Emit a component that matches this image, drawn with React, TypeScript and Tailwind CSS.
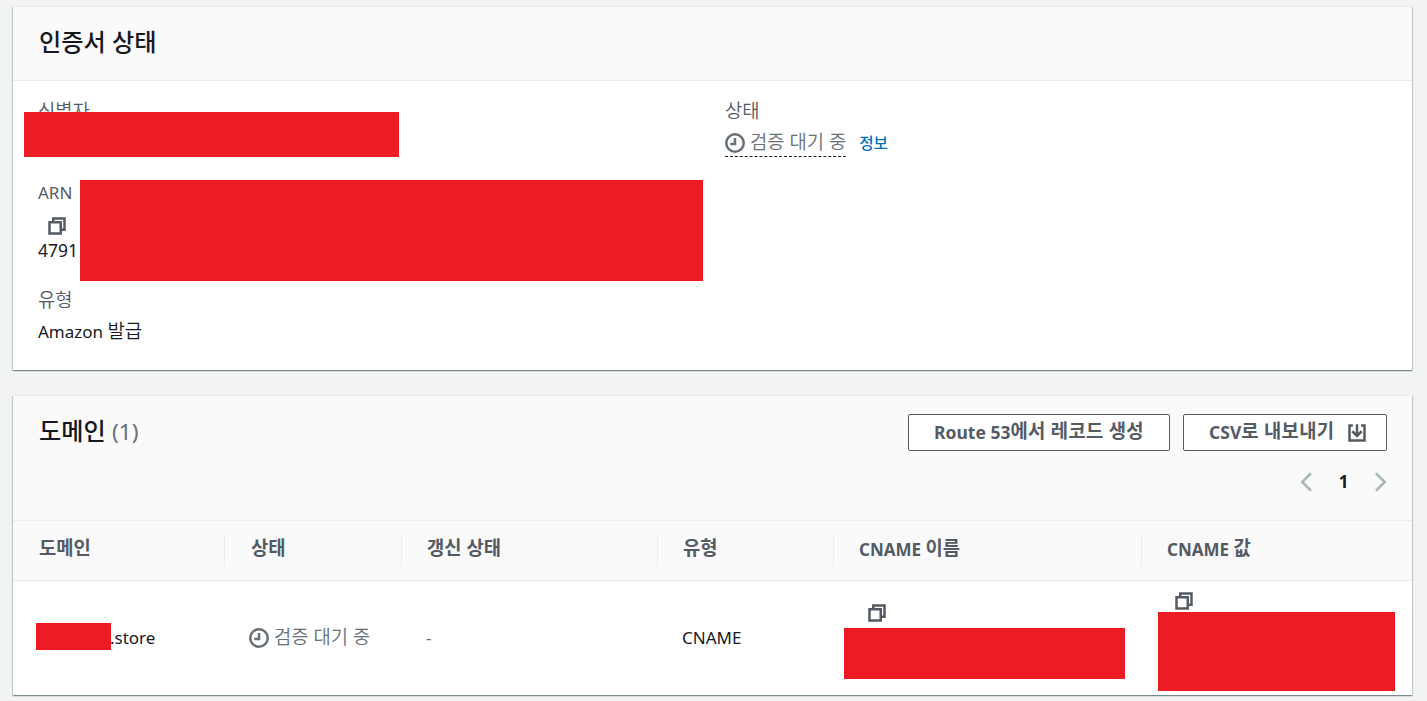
import type { ReactNode } from 'react';

function CopyIcon() {
  return (
    <svg viewBox="0 0 16 16" className="block size-5 fill-none stroke-[#545b64] stroke-2">
      <path d="M2 5h9v9H2z" />
      <path d="M5 5V2h9v9h-3" />
    </svg>
  );
}

function PendingIcon() {
  return (
    <svg viewBox="0 0 16 16" className="block size-5 shrink-0 fill-none stroke-[#687078] stroke-2">
      <circle cx="8" cy="8" r="7" />
      <path d="M8 4v4.7H4.2" />
    </svg>
  );
}

function DownloadIcon() {
  return (
    <svg viewBox="0 0 16 16" className="block size-5 fill-none stroke-[#545b64] stroke-2">
      <path d="M4.7 2H2v12h12V2h-2.7" />
      <path d="M8 1v9" />
      <path d="M4.3 6.6L8 10.3l3.7-3.7" />
    </svg>
  );
}

// Hangul is set a little larger than the Latin text beside it
function Ko({ className = 'font-[350]', children }: { className?: string; children: ReactNode }) {
  return <span className={`text-[18.8px] leading-none ${className}`}>{children}</span>;
}

function PendingStatus() {
  return (
    <>
      <PendingIcon />
      <span className="text-[#687078]">
        <Ko>검증 대기 중</Ko>
      </span>
    </>
  );
}

function Card({ className, children }: { className: string; children: ReactNode }) {
  return (
    <section
      className={`relative border-t border-[#eaeded] bg-white shadow-[0_1px_1px_0_rgba(0,28,36,0.3),1px_1px_1px_0_rgba(0,28,36,0.15),-1px_1px_1px_0_rgba(0,28,36,0.15)] ${className}`}
    >
      {children}
    </section>
  );
}

function Redaction({ className }: { className: string }) {
  return <div className={`absolute bg-[#ed1c24] ${className}`} />;
}

const columns = [
  { latin: '', label: '도메인', width: 'w-[212px] pl-[26px]' },
  { latin: '', label: '상태', width: 'w-[177px] pl-[26px]' },
  { latin: '', label: '갱신 상태', width: 'w-[256px] pl-[25px]' },
  { latin: '', label: '유형', width: 'w-[176px] pl-[25px]' },
  { latin: 'CNAME ', label: '이름', width: 'w-[308px] pl-[25px]' },
  { latin: 'CNAME ', label: '값', width: 'w-[270px] pl-[25px]' },
];

export default function App() {
  return (
    <div className="h-[701px] w-[1427px] overflow-hidden bg-[#f2f3f3] pt-1.5 pl-[13px] font-['Noto_Sans','Noto_Sans_CJK_KR',sans-serif] text-[17px] leading-[26px] text-[#16191f]">
      <Card className="h-[364px] w-[1399px]">
        <header className="h-[74px] border-b border-[#eaeded] bg-[#fafafa] pt-[18px] pl-[26px]">
          <h2 className="text-[24.2px] leading-[33px] font-medium">인증서 상태</h2>
        </header>
        <div className="flex pl-[25px]">
          <dl className="w-[687px]">
            <dt className="mt-[18px] text-[#545b64]">
              <Ko>식별자</Ko>
            </dt>
            <dd className="h-[55px]" />
            <dt className="text-[#545b64]">ARN</dt>
            <dd className="mt-2.5">
              <div className="pl-[9px]">
                <CopyIcon />
              </div>
              <div className="mt-px text-[17.5px]">4791</div>
            </dd>
            <dt className="mt-[25px] text-[#545b64]">
              <Ko>유형</Ko>
            </dt>
            <dd className="mt-[5px]">
              Amazon <Ko>발급</Ko>
            </dd>
          </dl>
          <dl>
            <dt className="mt-[18px] text-[#545b64]">
              <Ko>상태</Ko>
            </dt>
            <dd className="mt-[3px] flex">
              <span className="flex h-[29px] items-center gap-[5px] border-b border-dashed border-[#16191f] pt-px">
                <PendingStatus />
              </span>
              <a className="ml-[13px] text-[15.7px] leading-[30px] font-medium text-[#0073bb]">정보</a>
            </dd>
          </dl>
        </div>
        <Redaction className="top-[105px] left-[11px] h-[45px] w-[375px]" />
        <Redaction className="top-[173px] left-[67px] h-[101px] w-[623px]" />
      </Card>

      <Card className="mt-[25px] h-[300px] w-[1399px]">
        <header className="h-[124px] bg-[#fafafa] pr-[25px] pl-[26px]">
          <div className="flex justify-between">
            <h2 className="pt-[18px] text-[24.2px] leading-[34px] font-medium">
              도메인 <span className="text-[22.5px] font-normal text-[#687078]">(1)</span>
            </h2>
            <div className="flex gap-[13px] pt-[18px] font-bold text-[#545b64]">
              <button className="h-[37px] w-[262px] rounded-[2px] border border-[#545b64] bg-white pb-0.5 text-[17.5px]">
                Route 53<Ko className="align-[1px] font-bold tracking-[0.3px]">에서 레코드 생성</Ko>
              </button>
              <button className="flex h-[37px] w-[204px] items-center justify-between rounded-[2px] border border-[#545b64] bg-white pr-[19px] pl-[25px]">
                <span className="pb-px text-[17.5px]">
                  CSV<Ko className="align-[1px] font-bold tracking-[0.3px]">로 내보내기</Ko>
                </span>
                <DownloadIcon />
              </button>
            </div>
          </div>
          <nav className="mt-[18px] -mr-1 flex items-center justify-end gap-[22.5px]">
            <svg viewBox="0 0 16 16" className="size-5 fill-none stroke-[#aab7b8] stroke-2">
              <path d="M12 1L5 8l7 7" />
            </svg>
            <span className="font-bold">1</span>
            <svg viewBox="0 0 16 16" className="size-5 fill-none stroke-[#aab7b8] stroke-2">
              <path d="M4 1l7 7-7 7" />
            </svg>
          </nav>
        </header>
        <table className="w-full table-fixed border-collapse">
          <thead className="border-y border-[#eaeded] bg-[#fafafa]">
            <tr className="h-[60px]">
              {columns.map((col, i) => (
                <th key={col.label} className={`p-0 text-left font-bold text-[#545b64] ${col.width}`}>
                  <div className="flex h-[30px] items-center justify-between">
                    <span className="pb-px">
                      {col.latin}
                      <Ko className="align-[1px] font-bold">{col.label}</Ko>
                    </span>
                    {i < columns.length - 1 && <span className="h-[30px] w-px bg-[#eaeded]" />}
                  </div>
                </th>
              ))}
            </tr>
          </thead>
          <tbody>
            <tr className="h-[114px]">
              <td className="pl-[97px]">.store</td>
              <td className="pl-[24px]">
                <div className="flex items-center gap-[5px]">
                  <PendingStatus />
                </div>
              </td>
              <td className="pl-[24px] text-[#687078]">-</td>
              <td className="pl-[24px]">CNAME</td>
              <td className="pt-[22px] pl-[33px] align-top">
                <CopyIcon />
              </td>
              <td className="pt-[10px] pl-[32px] align-top">
                <CopyIcon />
              </td>
            </tr>
          </tbody>
        </table>
        <Redaction className="top-[227px] left-[23px] h-[27px] w-[75px]" />
        <Redaction className="top-[232px] left-[831px] h-[51px] w-[281px]" />
        <Redaction className="top-[216px] left-[1145px] h-[79px] w-[237px]" />
      </Card>
    </div>
  );
}
